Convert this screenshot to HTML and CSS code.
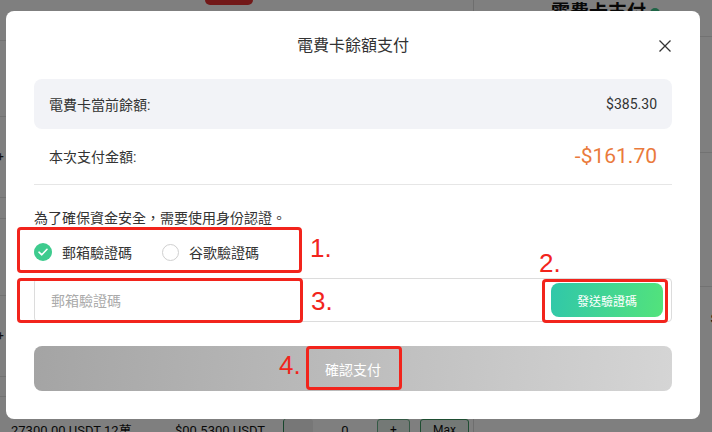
FILE: index.html
```html
<!DOCTYPE html>
<html lang="zh-Hant">
<head>
<meta charset="utf-8">
<title>電費卡餘額支付</title>
<link rel="stylesheet" href="styles.css">
</head>
<body>
<div class="page">
  <main class="main">
    <div class="topbar"><span class="red-btn"></span></div>
    <div class="row r76"></div>
    <div class="row r81"><span class="plus">+</span></div>
    <div class="row r21"></div>
    <div class="row r77"></div>
    <div class="row r81"><span class="plus">+</span></div>
    <div class="row r20"></div>
    <div class="bottom-row">
      <span class="cell c1">27300.00 USDT 12萬</span>
      <span class="cell c2">$00.5300 USDT</span>
      <span class="box b-grey"></span>
      <span class="cell c3">0</span>
      <span class="box b-plus">+</span>
      <span class="box b-wide">Max</span>
    </div>
  </main>
  <aside class="side">
    <div class="side-head"><span class="side-title">電費卡支付</span><span class="dot"></span></div>
    <div class="side-row s1"></div>
    <div class="side-row s2"></div>
    <div class="side-row s3"><span class="side-sym">$</span></div>
  </aside>
</div>

<div class="overlay">
  <div class="modal">
    <div class="modal-head">
      <span class="modal-title">電費卡餘額支付</span>
      <button class="close" aria-label="close">
        <svg width="12" height="12" viewBox="0 0 12 12"><path d="M0.5 0.5L11.5 11.5M11.5 0.5L0.5 11.5" stroke="#333" stroke-width="1.3" fill="none"/></svg>
      </button>
    </div>
    <div class="balance">
      <span>電費卡當前餘額:</span>
      <span class="num">$385.30</span>
    </div>
    <div class="pay-row">
      <span>本次支付金額:</span>
      <span class="amount">-$161.70</span>
    </div>
    <p class="notice">為了確保資金安全，需要使用身份認證。</p>
    <div class="radios">
      <label class="radio">
        <span class="dot-on">
          <svg width="10" height="8" viewBox="0 0 10 8"><path d="M1 4.2L3.8 6.8L9 1.3" stroke="#fff" stroke-width="1.6" fill="none" stroke-linecap="round" stroke-linejoin="round"/></svg>
        </span>
        <span>郵箱驗證碼</span>
      </label>
      <label class="radio">
        <span class="dot-off"></span>
        <span>谷歌驗證碼</span>
      </label>
    </div>
    <div class="code-field">
      <span class="placeholder">郵箱驗證碼</span>
      <button class="send-btn">發送驗證碼</button>
    </div>
    <button class="confirm">確認支付</button>

    <span class="mark m1"></span><span class="tag t1">1.</span>
    <span class="mark m2"></span><span class="tag t2">2.</span>
    <span class="mark m3"></span><span class="tag t3">3.</span>
    <span class="mark m4"></span><span class="tag t4">4.</span>
  </div>
</div>
</body>
</html>
```
FILE: styles.css
```css
* { box-sizing: border-box; }
html, body {
  margin: 0;
  width: 712px;
  height: 432px;
  overflow: hidden;
  background: #fff;
  font-family: Roboto, "Noto Sans CJK TC", sans-serif;
  color: #333;
}

/* background page */
.page {
  display: grid;
  grid-template-columns: 474px 1fr;
  height: 432px;
}
.main { border-right: 1px solid #ddd; display: flex; flex-direction: column; }
.topbar { height: 41px; border-bottom: 1px solid #e5e5e5; padding-left: 205px; }
.red-btn { display: block; width: 48px; height: 5px; background: #e53333; border-radius: 0 0 8px 8px; }
.row { border-bottom: 1px solid #e5e5e5; display: flex; align-items: center; }
.r76 { height: 76px; }
.r81 { height: 81px; }
.r21 { height: 21px; }
.r77 { height: 77px; }
.r20 { height: 20px; }
.plus { font-size: 12px; color: #222; margin-left: -3px; }
.bottom-row {
  display: flex;
  align-items: flex-start;
  padding-top: 22px;
  font-size: 13px;
  color: #111;
}
.cell { line-height: 16px; padding-top: 4px; }
.c1 { margin-left: 11px; width: 164px; }
.c2 { width: 108px; }
.c3 { width: 64px; text-align: center; }
.box { height: 22px; border-radius: 3px; font-size: 12px; text-align: center; line-height: 20px; }
.b-grey { width: 30px; background: #eee; border-left: 1px solid #2e8b57; margin-left: 0; }
.b-plus { width: 33px; background: #e8f2ec; border: 1px solid #6bb38a; }
.b-wide { width: 49px; margin-left: 10px; background: #e8f2ec; border: 1px solid #3c9a63; }

.side { position: relative; }
.side-head { display: flex; align-items: flex-start; gap: 4px; padding: 0 0 0 77px; height: 37px; border-bottom: 1px solid #e5e5e5; }
.side-title { font-size: 19px; line-height: 26px; font-weight: 700; color: #111; }
.dot { width: 10px; height: 10px; margin-top: 8px; border-radius: 50%; background: #3ec98d; }
.side-row { border-bottom: 1px solid #e5e5e5; }
.s1 { height: 116px; }
.s2 { height: 134px; }
.s3 { height: 120px; border-bottom: 0; display: flex; justify-content: flex-end; padding-top: 24px; }
.side-sym { font-size: 13px; font-weight: 700; color: #222; margin-right: -6px; }

/* overlay + modal */
.overlay {
  position: fixed;
  inset: 0;
  background: rgba(0, 0, 0, 0.5);
}
.modal {
  position: absolute;
  left: 6px;
  top: 11px;
  width: 694px;
  height: 408px;
  background: #fff;
  border-radius: 8px;
  padding: 23px 28px 28px;
  display: flex;
  flex-direction: column;
  font-size: 14px;
  color: #333;
}
.modal-head {
  position: relative;
  height: 24px;
  text-align: center;
  line-height: 24px;
}
.modal-title { font-size: 16px; color: #333; }
.close {
  position: absolute;
  right: 1px;
  top: 6px;
  width: 12px;
  height: 12px;
  padding: 0;
  border: 0;
  background: none;
  display: flex;
}
.balance {
  margin-top: 21px;
  height: 50px;
  background: #f2f3f7;
  border-radius: 8px;
  display: flex;
  align-items: center;
  justify-content: space-between;
  padding: 0 15px;
}
.num { font-size: 14px; color: #333; }
.pay-row {
  height: 56px;
  border-bottom: 1px solid #e6e6e6;
  display: flex;
  align-items: center;
  justify-content: space-between;
  padding: 0 15px 1px;
}
.amount { font-size: 21px; color: #ea7a3c; }
.notice { margin: 23px 0 0; line-height: 20px; font-size: 14px; }
.radios { height: 48px; display: flex; align-items: center; gap: 30px; }
.radio { display: flex; align-items: center; gap: 10px; font-size: 14px; }
.dot-on {
  width: 18px;
  height: 18px;
  border-radius: 50%;
  background: #3ecb8e;
  display: flex;
  align-items: center;
  justify-content: center;
}
.dot-off {
  width: 17px;
  height: 17px;
  border-radius: 50%;
  border: 1px solid #cfcfcf;
  background: #fff;
}
.code-field {
  margin-top: 2px;
  height: 44px;
  border: 1px solid #dcdcdc;
  border-radius: 4px;
  display: flex;
  align-items: center;
  justify-content: space-between;
  padding: 0 8px 0 16px;
}
.placeholder { color: #aaa; font-size: 14px; }
.send-btn {
  width: 112px;
  height: 34px;
  border: 0;
  border-radius: 8px;
  background: linear-gradient(100deg, #30c7aa 0%, #53e37b 100%);
  color: #fff;
  font-family: inherit;
  font-size: 12px;
}
.confirm {
  margin-top: 24px;
  height: 45px;
  border: 0;
  border-radius: 8px;
  background: linear-gradient(95deg, #a4a4a4 0%, #d5d5d5 100%);
  color: #fff;
  font-family: inherit;
  font-size: 14px;
}

/* annotations */
.mark {
  position: absolute;
  border: 3px solid #f2241c;
  border-radius: 4px;
}
.m1 { left: 11px; top: 216px; width: 285px; height: 46px; }
.m2 { left: 536px; top: 268px; width: 126px; height: 44px; }
.m3 { left: 11px; top: 267px; width: 286px; height: 45px; }
.m4 { left: 300px; top: 335px; width: 96px; height: 44px; }
.tag {
  position: absolute;
  font-family: "Liberation Sans", sans-serif;
  font-size: 26px;
  line-height: 26px;
  color: #f2241c;
}
.t1 { left: 304px; top: 224px; }
.t2 { left: 533px; top: 239px; }
.t3 { left: 305px; top: 277px; }
.t4 { left: 273px; top: 341px; }
```
